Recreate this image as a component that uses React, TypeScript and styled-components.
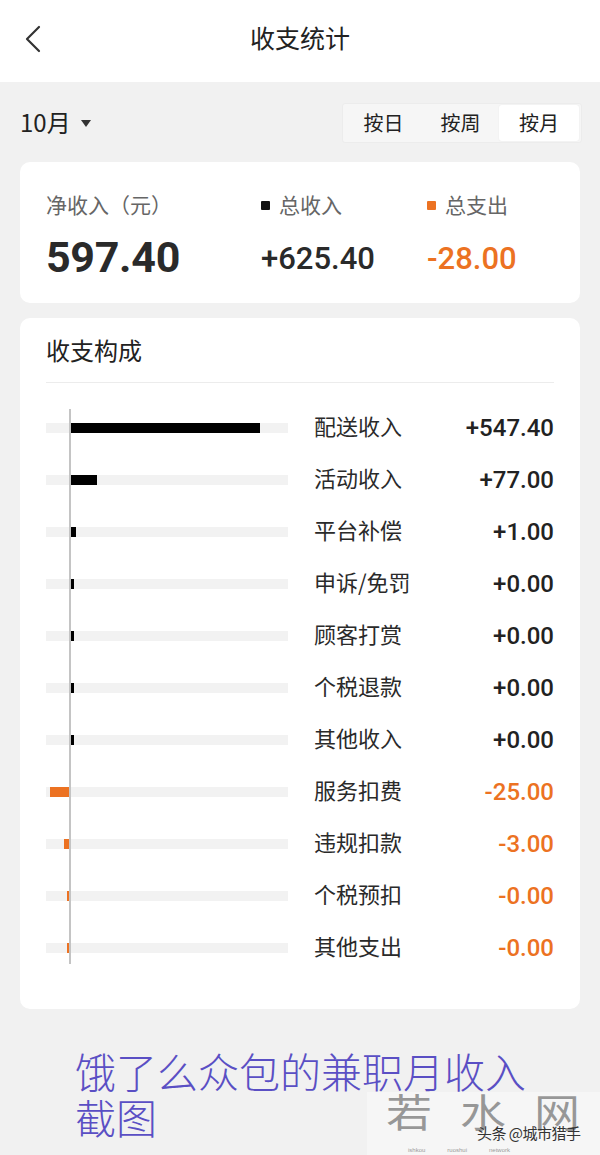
import React from "react";
import styled, { createGlobalStyle } from "styled-components";

const GlobalStyle = createGlobalStyle`
  html, body {
    margin: 0;
    padding: 0;
    background: #f1f1f1;
  }
  body {
    font-family: "Noto Sans CJK SC", "Noto Sans", sans-serif;
    color: #333;
  }
  * { box-sizing: border-box; }
`;

const Page = styled.div`
  position: relative;
  width: 600px;
  height: 1155px;
  overflow: hidden;
  background: #f1f1f1;
`;

const Header = styled.header`
  height: 82px;
  background: #fff;
  display: grid;
  grid-template-columns: 80px 1fr 80px;
  align-items: center;
`;

const BackButton = styled.div`
  display: flex;
  align-items: center;
  padding-left: 24px;
  height: 100%;
  padding-bottom: 4px;
`;

const Title = styled.h1`
  margin: 0;
  text-align: center;
  font-size: 25px;
  font-weight: 400;
  color: #222;
  line-height: 1;
  padding-bottom: 8px;
`;

const Toolbar = styled.div`
  display: flex;
  justify-content: space-between;
  align-items: center;
  height: 40px;
  margin: 21px 20px 19px 20px;
`;

const MonthPicker = styled.div`
  display: flex;
  align-items: center;
  gap: 10px;
  font-size: 24px;
  color: #222;
  line-height: 1;
  padding-bottom: 2px;
`;

const Caret = styled.span`
  width: 0;
  height: 0;
  border-left: 5.5px solid transparent;
  border-right: 5.5px solid transparent;
  border-top: 7px solid #333;
  margin-top: 2px;
`;

const Segmented = styled.div`
  display: flex;
  align-items: center;
  height: 40px;
  padding: 2px;
  background: #f6f6f6;
  border: 1px solid #ececec;
  border-radius: 3px;
  margin-right: -2px;
`;

const Segment = styled.div<{ $active?: boolean }>`
  width: ${(p) => (p.$active ? 80 : 77)}px;
  height: 36px;
  display: flex;
  align-items: center;
  justify-content: center;
  font-size: 20px;
  color: #222;
  padding-bottom: 2px;
  background: ${(p) => (p.$active ? "#fff" : "transparent")};
  border-radius: 3px;
  box-shadow: ${(p) => (p.$active ? "0 0 2px rgba(0,0,0,0.06)" : "none")};
`;

const Card = styled.section`
  margin: 0 20px;
  background: #fff;
  border-radius: 10px;
`;

const SummaryCard = styled(Card)`
  height: 141px;
  padding: 28px 26px 0 26px;
  display: grid;
  grid-template-columns: 215px 166px 1fr;
  grid-template-rows: 28px 1fr;
  row-gap: 20px;
`;

const SummaryLabel = styled.div`
  display: flex;
  align-items: center;
  gap: 9px;
  font-size: 21px;
  color: #666;
  line-height: 1;
`;

const Dot = styled.span<{ $color: string }>`
  width: 9px;
  height: 9px;
  margin-top: 2px;
  background: ${(p) => p.$color};
  border-radius: 1px;
`;

const BigNumber = styled.div`
  font-family: "Roboto", "Liberation Sans", sans-serif;
  font-size: 43px;
  font-weight: 700;
  color: #2a2a2a;
  line-height: 1;
  margin-top: -2px;
  letter-spacing: -0.3px;
`;

const MidNumber = styled.div<{ $color: string }>`
  font-family: "Roboto", "Liberation Sans", sans-serif;
  font-size: 31px;
  font-weight: 500;
  color: ${(p) => p.$color};
  line-height: 1;
  margin-top: 5px;
`;

const BreakdownCard = styled(Card)`
  margin-top: 15px;
  padding: 18px 26px 35px 26px;
`;

const SectionTitle = styled.h2`
  margin: 0;
  font-size: 24px;
  font-weight: 400;
  color: #222;
  line-height: 28px;
  padding-bottom: 6px;
`;

const Divider = styled.div`
  height: 1px;
  background: #ececec;
  margin: 12px 0 19px 0;
`;

const Rows = styled.div`
  position: relative;
`;

const Axis = styled.div`
  position: absolute;
  left: 23px;
  top: 7px;
  bottom: 10px;
  width: 2px;
  background: #c4c4c4;
`;

const Row = styled.div`
  height: 52px;
  display: grid;
  grid-template-columns: 242px 1fr auto;
  column-gap: 26px;
  align-items: center;
`;

const Track = styled.div`
  height: 10px;
  background: #f2f2f2;
  display: flex;
`;

const NegSide = styled.div`
  width: 23px;
  display: flex;
  justify-content: flex-end;
`;

const AxisGap = styled.div`
  width: 2px;
`;

const PosSide = styled.div`
  flex: 1;
  display: flex;
`;

const Bar = styled.div<{ $color: string }>`
  height: 10px;
  background: ${(p) => p.$color};
`;

const RowLabel = styled.div`
  font-size: 22px;
  color: #2a2a2a;
  line-height: 1;
  padding-bottom: 7px;
`;

const RowValue = styled.div<{ $color: string }>`
  font-family: "Roboto", "Liberation Sans", sans-serif;
  font-size: 24px;
  font-weight: 500;
  color: ${(p) => p.$color};
  text-align: right;
  line-height: 1;
`;

const Caption = styled.div`
  margin: 38px 0 0 75px;
  font-size: 41px;
  font-weight: 300;
  line-height: 46px;
  color: #5a4fc4;
  display: flex;
  flex-direction: column;
  align-items: flex-start;
`;

const CaptionLine = styled.span`
  display: block;
`;

const Watermark = styled.div`
  position: absolute;
  left: 367px;
  top: 1092px;
  width: 233px;
  height: 63px;
  background: rgba(255, 255, 255, 0.35);
`;

const WatermarkChars = styled.div`
  position: absolute;
  left: 386px;
  top: 1090px;
  display: flex;
  gap: 28px;
  font-size: 46px;
  line-height: 1;
  color: rgba(120, 120, 120, 0.75);
  transform: scaleY(0.85);
  transform-origin: top left;
`;

const Credit = styled.div`
  position: absolute;
  left: 477px;
  top: 1125px;
  font-size: 15px;
  line-height: 1;
  color: #333;
  letter-spacing: -0.5px;
`;

const TinyText = styled.div`
  position: absolute;
  left: 408px;
  top: 1147px;
  display: flex;
  gap: 22px;
  font-family: "Liberation Sans", sans-serif;
  font-size: 6px;
  color: #9a9a9a;
`;

const ORANGE = "#ec7222";
const DARK = "#222";

type Item = { label: string; value: string; neg?: boolean; width: number };

const items: Item[] = [
  { label: "配送收入", value: "+547.40", width: 189 },
  { label: "活动收入", value: "+77.00", width: 26 },
  { label: "平台补偿", value: "+1.00", width: 5 },
  { label: "申诉/免罚", value: "+0.00", width: 3 },
  { label: "顾客打赏", value: "+0.00", width: 3 },
  { label: "个税退款", value: "+0.00", width: 3 },
  { label: "其他收入", value: "+0.00", width: 3 },
  { label: "服务扣费", value: "-25.00", neg: true, width: 19 },
  { label: "违规扣款", value: "-3.00", neg: true, width: 5 },
  { label: "个税预扣", value: "-0.00", neg: true, width: 2 },
  { label: "其他支出", value: "-0.00", neg: true, width: 2 },
];

export default function App() {
  return (
    <Page>
      <GlobalStyle />
      <Header>
        <BackButton>
          <svg width="18" height="28" viewBox="0 0 18 28" fill="none">
            <path d="M15 2 L3 14 L15 26" stroke="#333" strokeWidth="2.2" strokeLinecap="round" strokeLinejoin="round" />
          </svg>
        </BackButton>
        <Title>收支统计</Title>
        <div />
      </Header>

      <Toolbar>
        <MonthPicker>
          <span>10月</span>
          <Caret />
        </MonthPicker>
        <Segmented>
          <Segment>按日</Segment>
          <Segment>按周</Segment>
          <Segment $active>按月</Segment>
        </Segmented>
      </Toolbar>

      <SummaryCard>
        <SummaryLabel>净收入（元）</SummaryLabel>
        <SummaryLabel>
          <Dot $color="#111" />
          总收入
        </SummaryLabel>
        <SummaryLabel>
          <Dot $color={ORANGE} />
          总支出
        </SummaryLabel>
        <BigNumber>597.40</BigNumber>
        <MidNumber $color="#2a2a2a">+625.40</MidNumber>
        <MidNumber $color={ORANGE}>-28.00</MidNumber>
      </SummaryCard>

      <BreakdownCard>
        <SectionTitle>收支构成</SectionTitle>
        <Divider />
        <Rows>
          {items.map((it) => (
            <Row key={it.label}>
              <Track>
                <NegSide>
                  {it.neg && <Bar $color={ORANGE} style={{ width: it.width }} />}
                </NegSide>
                <AxisGap />
                <PosSide>
                  {!it.neg && <Bar $color="#000" style={{ width: it.width }} />}
                </PosSide>
              </Track>
              <RowLabel>{it.label}</RowLabel>
              <RowValue $color={it.neg ? ORANGE : DARK}>{it.value}</RowValue>
            </Row>
          ))}
          <Axis />
        </Rows>
      </BreakdownCard>

      <Caption>
        <CaptionLine>饿了么众包的兼职月收入</CaptionLine>
        <CaptionLine>截图</CaptionLine>
      </Caption>

      <Watermark />
      <WatermarkChars>
        <span>若</span>
        <span>水</span>
        <span>网</span>
      </WatermarkChars>
      <Credit>头条 @城市猎手</Credit>
      <TinyText>
        <span>ishkou</span>
        <span>ruoshui</span>
        <span>network</span>
      </TinyText>
    </Page>
  );
}
